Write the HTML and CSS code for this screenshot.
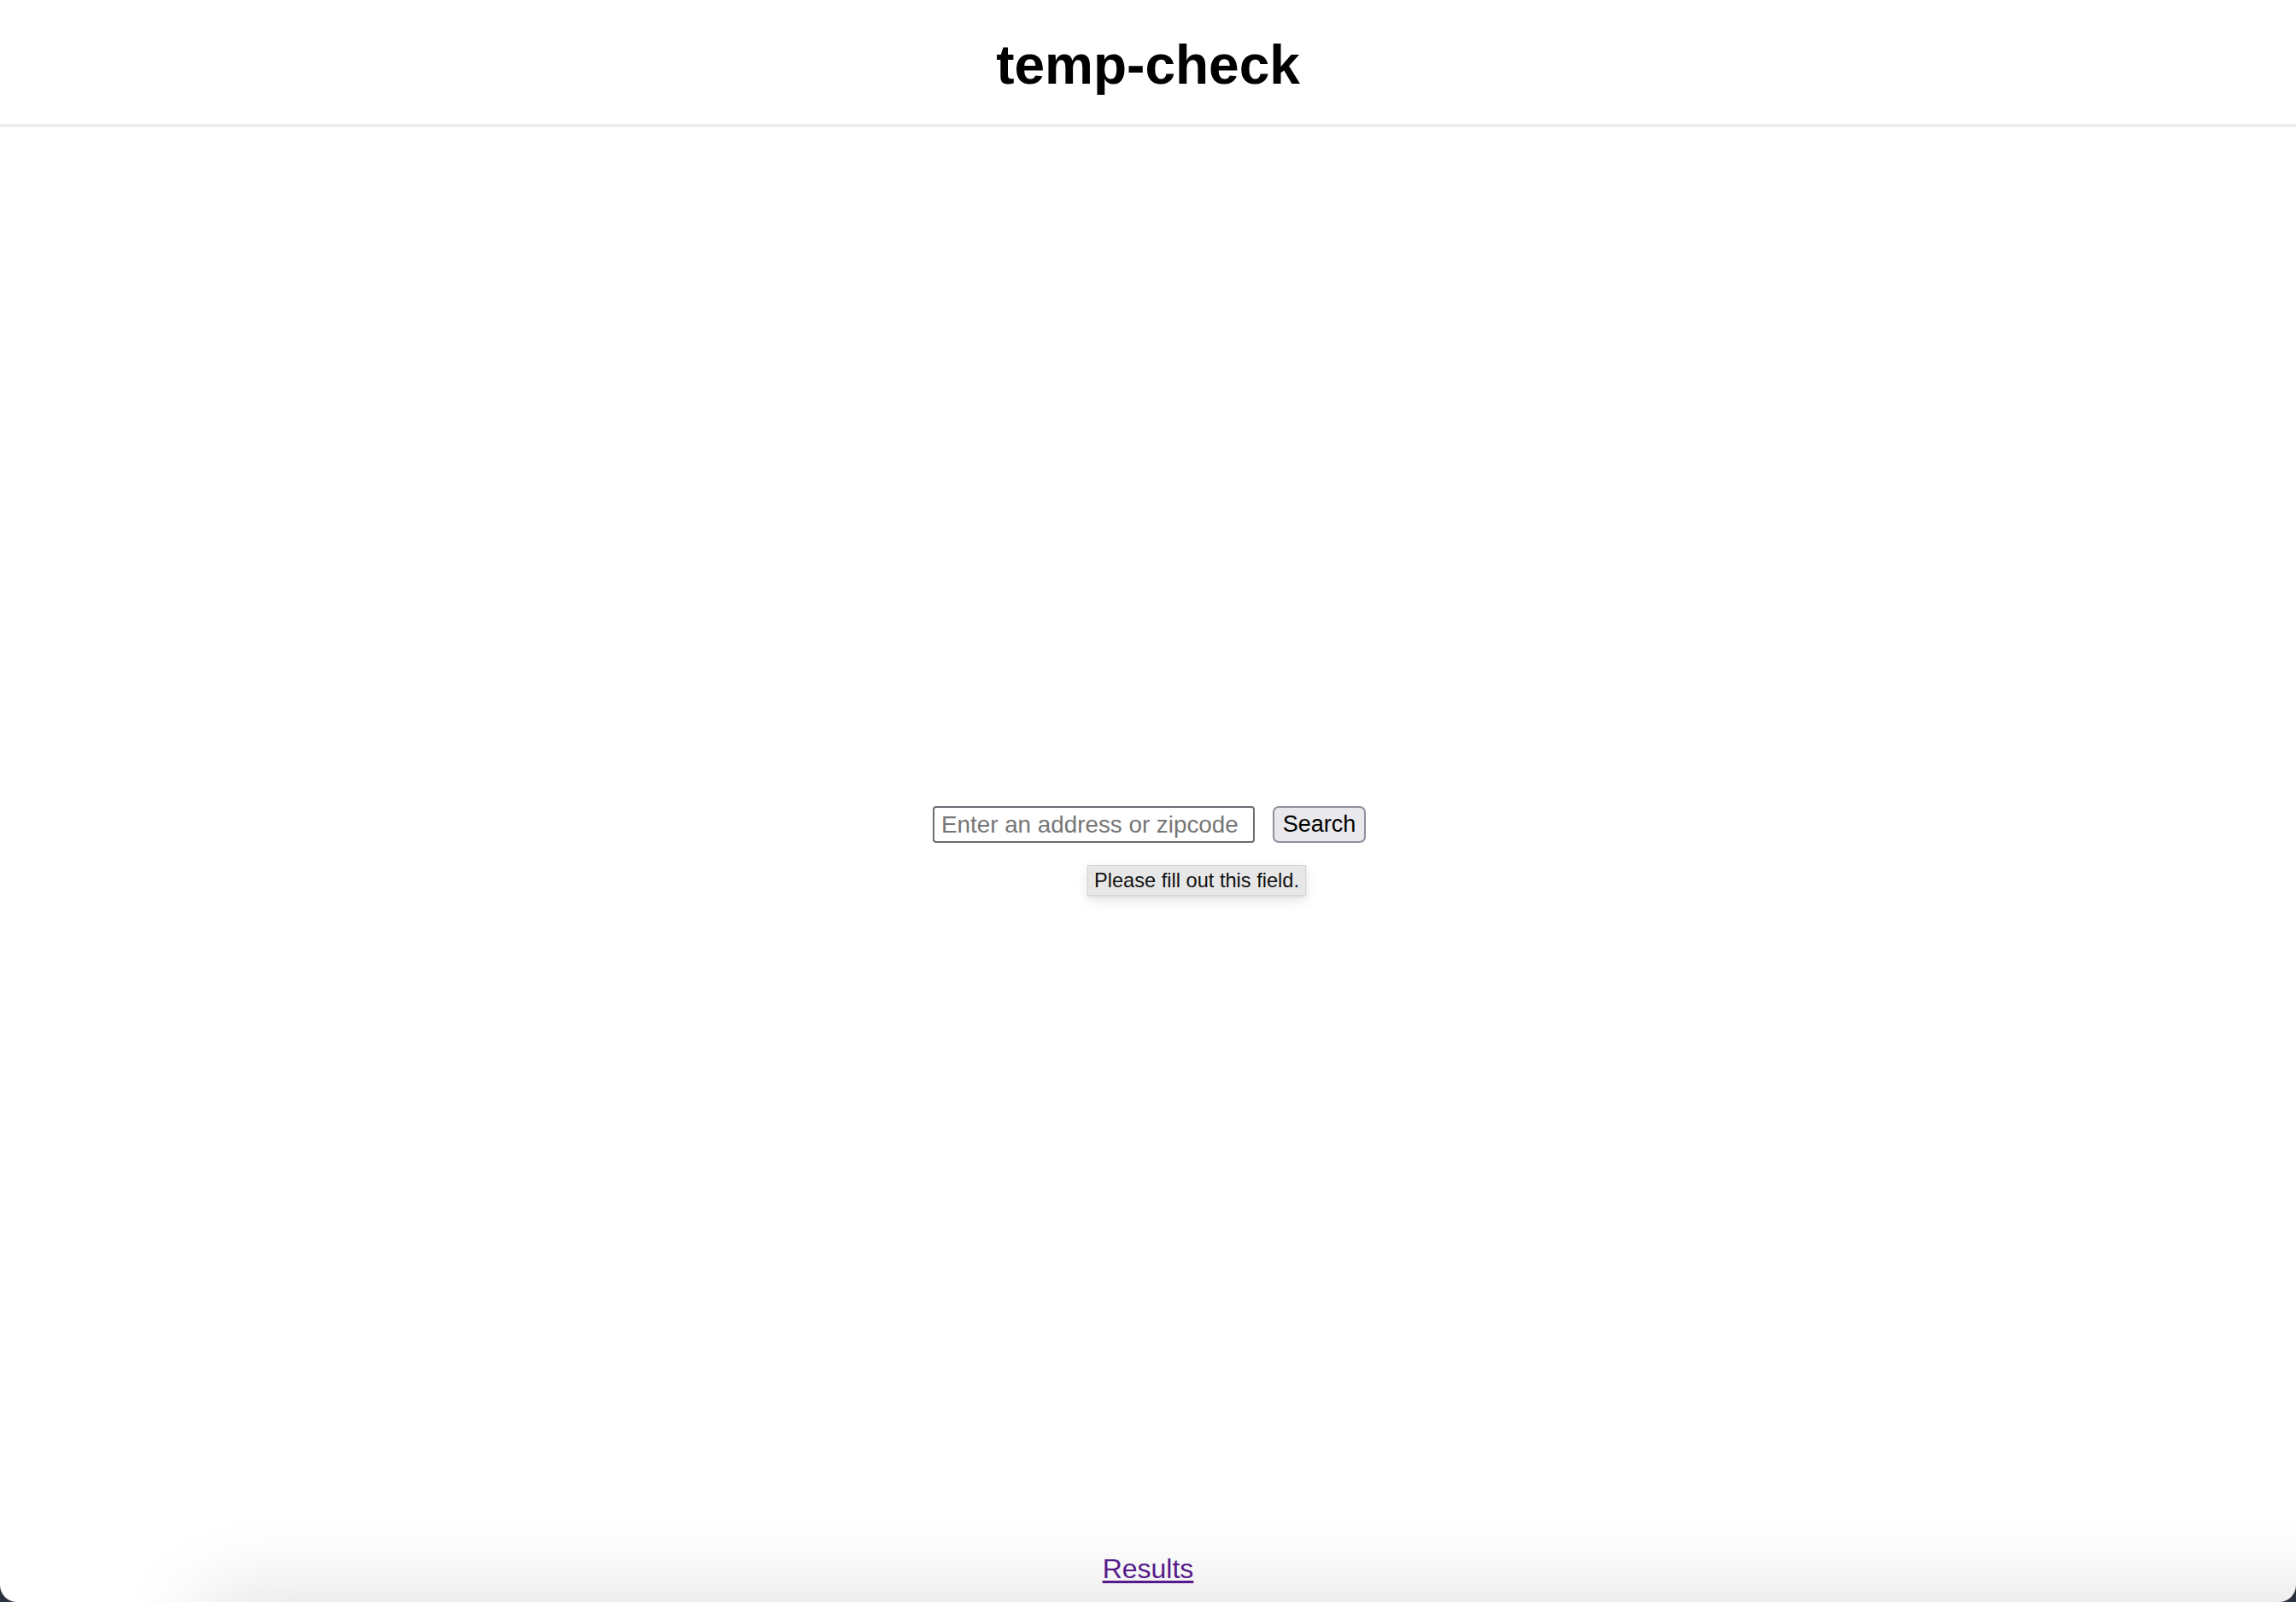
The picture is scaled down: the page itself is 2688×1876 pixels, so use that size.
FILE: index.html
```html
<!DOCTYPE html>
<html lang="en">
<head>
<meta charset="utf-8">
<title>temp-check</title>
<link rel="stylesheet" href="styles.css">
</head>
<body>
<div class="window">
  <header class="site-header">
    <h1 class="site-title">temp-check</h1>
  </header>
  <main class="site-main">
    <form class="search-form">
      <input class="search-input" type="text" placeholder="Enter an address or zipcode">
      <button class="search-button" type="button">Search</button>
      <div class="validation-tip">Please fill out this field.</div>
    </form>
  </main>
  <footer class="site-footer">
    <a class="footer-link" href="#results">Results</a>
  </footer>
  <div class="dock-shadow"></div>
</div>
</body>
</html>
```

FILE: styles.css
```css
html, body {
  margin: 0;
  padding: 0;
  height: 100%;
  background: #2c3140;
}

.window {
  position: relative;
  height: 1876px;
  background: #ffffff;
  border-radius: 0 0 20px 20px;
  overflow: hidden;
  display: flex;
  flex-direction: column;
  font-family: "Liberation Sans", Arial, sans-serif;
}

.site-header {
  height: 149px;
  box-sizing: border-box;
  padding-top: 40px;
  border-bottom: 4px solid #eeeeee;
  text-align: center;
  flex: none;
}

.site-title {
  margin: 0;
  font-size: 64px;
  line-height: 72px;
  font-weight: 700;
  color: #000;
}

.site-main {
  flex: 1;
  display: flex;
  align-items: center;
  justify-content: center;
}

.search-form {
  position: relative;
  display: flex;
  align-items: center;
  gap: 21px;
  margin-left: 3px;
}

.search-input {
  box-sizing: border-box;
  width: 377px;
  height: 43px;
  padding: 0 8px;
  border: 2px solid #6c6c74;
  border-radius: 4px;
  font-family: "Liberation Sans", Arial, sans-serif;
  font-size: 27.8px;
  color: #000;
  background: #fff;
  outline: none;
}

.search-input::placeholder {
  color: #767676;
}

.search-button {
  box-sizing: border-box;
  width: 109px;
  height: 43px;
  padding: 0;
  border: 2px solid #8f8f9d;
  border-radius: 7px;
  background: #e9e9ed;
  font-family: "Liberation Sans", Arial, sans-serif;
  font-size: 27px;
  color: #000;
}

.validation-tip {
  position: absolute;
  left: 181px;
  top: 69px;
  box-sizing: border-box;
  width: 256px;
  height: 36px;
  padding: 0 7px;
  display: flex;
  align-items: center;
  background: #e7e7e7;
  border: 1px solid #d6d6d6;
  box-shadow: 0 6px 14px rgba(0, 0, 0, 0.10), 0 1px 3px rgba(0, 0, 0, 0.10);
  font-family: "Liberation Sans", Arial, sans-serif;
  font-size: 23.6px;
  color: #111;
  white-space: nowrap;
}

.site-footer {
  flex: none;
  height: 94px;
  box-sizing: border-box;
  padding-top: 37px;
  text-align: center;
  position: relative;
  z-index: 2;
}

.footer-link {
  font-size: 32px;
  line-height: 36px;
  color: #551a8b;
  text-decoration: underline;
  text-underline-offset: 3px;
  text-decoration-thickness: 3px;
}

.dock-shadow {
  position: absolute;
  left: 230px;
  right: -200px;
  top: 1876px;
  height: 200px;
  border-radius: 60px;
  background: #ddd;
  box-shadow: 0 0 100px 10px rgba(0, 0, 0, 0.12);
  z-index: 1;
}
```
